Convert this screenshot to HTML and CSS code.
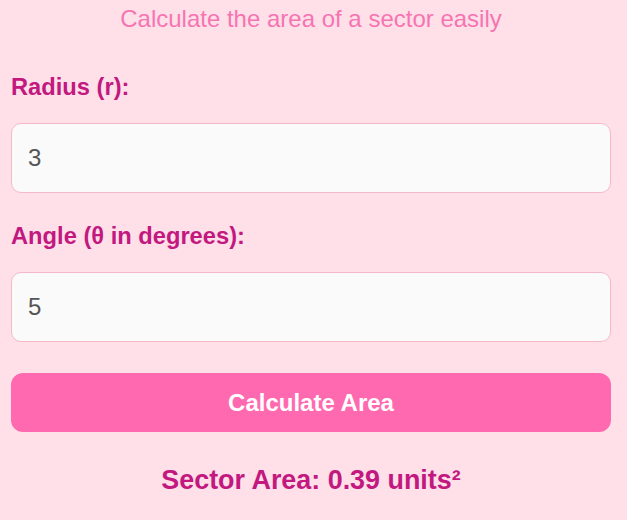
FILE: index.html
```html
<!DOCTYPE html>
<html lang="en">
<head>
    <meta charset="UTF-8">
    <title>Sector Area Calculator</title>
    <link rel="stylesheet" href="styles.css">
</head>
<body>
<div id="calc">
    <p class="subtitle">Calculate the area of a sector easily</p>

    <label class="field-label" for="radius">Radius (r):</label>
    <input id="radius" class="field" type="number" value="3">

    <label class="field-label angle" for="angle">Angle (θ in degrees):</label>
    <input id="angle" class="field" type="number" value="5">

    <button class="button" id="go">Calculate Area</button>

    <p class="result" id="result">Sector Area: 0.39 units²</p>
</div>
<script>
    document.querySelector('#go').onclick = () => {
        let r = parseFloat(document.querySelector('#radius').value);
        let deg = parseFloat(document.querySelector('#angle').value);
        let out = document.querySelector('#result');
        if (isNaN(r) || isNaN(deg)) {
            out.innerHTML = "Please enter both values.";
            return;
        }
        let area = (deg / 360) * Math.PI * r * r;
        out.innerHTML = "Sector Area: " + area.toFixed(2) + " units²";
    };
</script>
</body>
</html>
```

FILE: styles.css
```css
html, body{
    margin: 0;
    background-color: #ffe0e9;
}
#calc{
    display: flex;
    flex-direction: column;
    width: 600px;
    margin-left: 11px;
    font-family: "Liberation Sans", Arial, sans-serif;
}
.subtitle{
    margin: 5px 0 0 0;
    text-align: center;
    font-size: 24px;
    color: #f774b2;
}
.field-label{
    margin-top: 41px;
    margin-bottom: 22px;
    font-size: 23.7px;
    line-height: 27px;
    font-weight: bold;
    color: #c2187f;
}
.field-label.angle{
    margin-top: 30px;
}
.field{
    box-sizing: border-box;
    height: 70px;
    padding: 0 16px;
    font-family: inherit;
    font-size: 24px;
    color: #555;
    background-color: #fafafa;
    border: 1px solid #f6b9cc;
    border-radius: 10px;
    outline: none;
    -moz-appearance: textfield;
}
.field::-webkit-outer-spin-button,
.field::-webkit-inner-spin-button{
    -webkit-appearance: none;
    margin: 0;
}
.button{
    margin-top: 31px;
    height: 59px;
    border: none;
    border-radius: 12px;
    background-color: #ff69b0;
    color: #fff;
    font-family: inherit;
    font-size: 24px;
    font-weight: bold;
    cursor: pointer;
}
.button:hover{
    background-color: #ff5aa7;
}
.result{
    margin: 33px 0 0 0;
    text-align: center;
    font-size: 26.9px;
    font-weight: bold;
    color: #c2187f;
}
```
